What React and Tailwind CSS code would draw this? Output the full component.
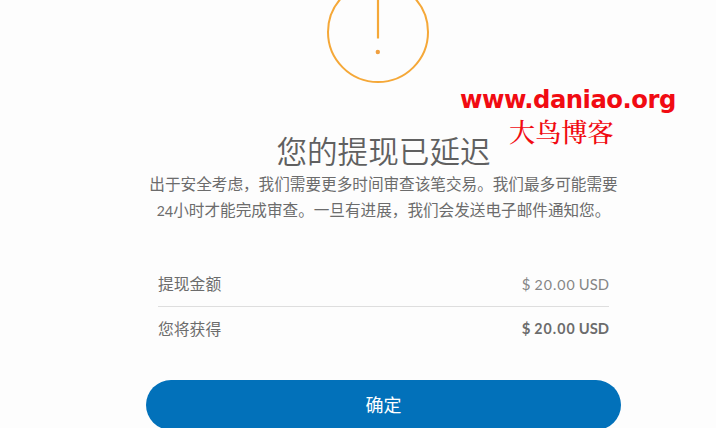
function WarningIcon() {
  return (
    <svg className="block shrink-0" width="104" height="84" viewBox="0 0 104 84" fill="none">
      <circle cx="52" cy="32" r="50" stroke="#f5a838" strokeWidth="2" />
      <path d="M52 -4V38.5" stroke="#f5a838" strokeWidth="2.2" />
      <circle cx="51.8" cy="52" r="2.2" fill="#f0a040" />
    </svg>
  );
}

function AmountRow({ label, value, className, amountClass }) {
  return (
    <div className={`flex items-center justify-between ${className}`}>
      <span className="text-[15.8px]">{label}</span>
      <span className={`flex items-baseline gap-[4px] text-[15px] whitespace-nowrap ${amountClass}`}>
        <span>$</span>
        <span className="-mr-[1px] text-[14.2px] tracking-[1px]">{value}</span>
        <span className="text-[14.8px]">USD</span>
      </span>
    </div>
  );
}

function Watermark() {
  return (
    <div className="absolute left-[460px] top-[86px] w-[218px] text-[#f10b12]">
      <div className="whitespace-nowrap font-['DejaVu_Sans'] text-[24.3px] leading-[28px] font-bold tracking-[-0.5px]">www.daniao.org</div>
      <div className="ml-[49px] mt-[1px] whitespace-nowrap font-['Noto_Serif_CJK_SC','Noto_Sans_CJK_SC',serif] text-[26.2px] leading-[32px] font-medium">大鸟博客</div>
    </div>
  );
}

export default function App() {
  return (
    <main className="relative h-[428px] w-[716px] overflow-hidden bg-[#fdfdfd] font-[Lato,'Noto_Sans_CJK_SC',sans-serif] text-[#6c6c6c]">
      <section className="ml-[146px] flex w-[475px] flex-col">
        <div className="ml-[180px]">
          <WarningIcon />
        </div>
        <h1 className="mt-[46px] h-[41px] text-center font-['Noto_Sans_CJK_SC',sans-serif] text-[30.6px] leading-[40px] font-[350] whitespace-nowrap text-[#606060]">
          您的提现已延迟
        </h1>
        <p className="h-[52px] text-center text-[15.62px] leading-[26px] whitespace-nowrap">
          出于安全考虑，我们需要更多时间审查该笔交易。我们最多可能需要
          <br />
          <span className="text-[14px]">2</span><span className="relative top-[1px] text-[14.6px]">4</span>小时才能完成审查。一旦有进展，我们会发送电子邮件通知您。
        </p>
        <div className="mx-[12px] mt-[39px]">
          <AmountRow label="提现金额" value="20.00" className="h-[45px] border-b border-[#dedede]" amountClass="text-[#858585]" />
          <AmountRow label="您将获得" value="20.00" className="h-[43px]" amountClass="font-bold" />
        </div>
        <button className="mt-[30px] h-[50px] w-full rounded-full bg-[#0271ba] text-[18px] leading-[50px] text-white">
          确定
        </button>
      </section>
      <Watermark />
    </main>
  );
}
